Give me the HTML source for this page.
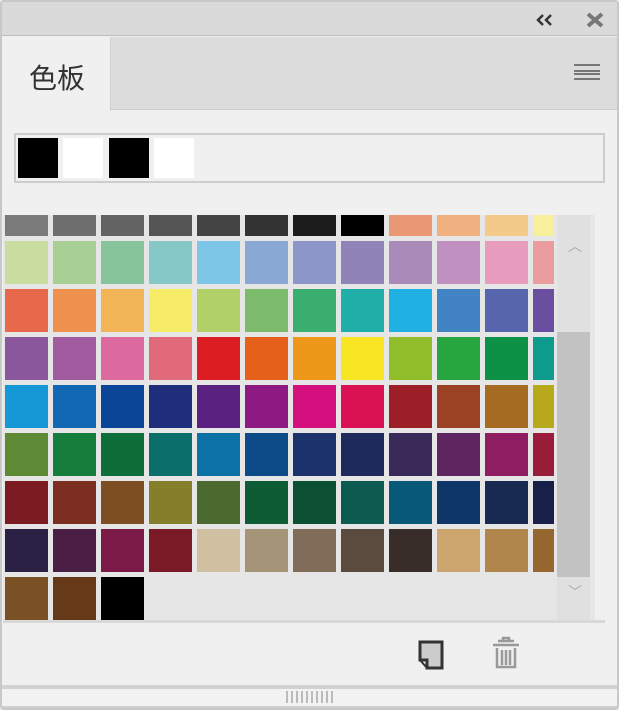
<!DOCTYPE html>
<html><head><meta charset="utf-8"><style>
*{margin:0;padding:0;box-sizing:border-box}
body{width:619px;height:710px;background:#f0f0f0;position:relative;overflow:hidden;font-family:"Liberation Sans","Noto Sans CJK SC",sans-serif}
.a{position:absolute}
.sw{position:absolute;width:43px;height:43px}
</style></head><body>
<div class="a" style="left:0;top:0;width:619px;height:710px;border:2px solid #c8c8c8;border-radius:4px"></div>
<div class="a" style="left:2px;top:2px;width:615px;height:34px;background:#dadada;border-bottom:1px solid #bdbdbd"></div>
<svg class="a" style="left:536px;top:13px" width="20" height="14"><path d="M7 2L2 7L7 12M15 2L10 7L15 12" stroke="#333" stroke-width="2.5" fill="none"/></svg>
<svg class="a" style="left:586px;top:12px" width="18" height="16"><path d="M2 2L16 14M16 2L2 14" stroke="#777" stroke-width="4"/></svg>
<div class="a" style="left:2px;top:37px;width:615px;height:73px;background:#dcdcdc;border-bottom:1px solid #cfcfcf"></div>
<div class="a" style="left:2px;top:37px;width:109px;height:74px;background:#f0f0f0;border-right:1px solid #cfcfcf"></div>
<div class="a" style="left:29px;top:57px;font-size:28px;color:#333">色板</div>
<div class="a" style="left:574px;top:64px;width:26px;height:16px;border-top:2px solid #777;border-bottom:2px solid #777"></div>
<div class="a" style="left:574px;top:70px;width:26px;height:5px;border-top:2px solid #777;border-bottom:2px solid #777"></div>
<div class="a" style="left:14px;top:133px;width:591px;height:50px;border:2px solid #cdcdcd"></div>
<div class="a" style="left:18px;top:138px;width:40px;height:40px;background:#000"></div>
<div class="a" style="left:63px;top:138px;width:40px;height:40px;background:#fff"></div>
<div class="a" style="left:109px;top:138px;width:40px;height:40px;background:#000"></div>
<div class="a" style="left:154px;top:138px;width:40px;height:40px;background:#fff"></div>
<div class="a" style="left:3px;top:215px;width:592px;height:406px;background:#e6e6e6;overflow:hidden" id="g"></div>
<div class="a" style="left:557px;top:215px;width:33px;height:405px;background:#e0e0e0"></div>
<div class="a" style="left:557px;top:332px;width:33px;height:245px;background:#c2c2c2"></div>
<div class="a" style="left:568px;top:236px;color:#aaa;font-size:14px">︿</div>
<div class="a" style="left:568px;top:582px;color:#aaa;font-size:14px">﹀</div>
<div class="a" style="left:3px;top:620px;width:602px;height:3px;background:#d8d8d8"></div>
<svg class="a" style="left:418px;top:640px" width="28" height="30"><path d="M2 2H24V28H9V20H2Z" fill="#ccc" stroke="#333" stroke-width="3"/><path d="M2 20L9 28" stroke="#333" stroke-width="2"/></svg>
<svg class="a" style="left:490px;top:636px" width="32" height="34"><path d="M8 5h16M3 9h26M13 4V2h6v2M7 12v19h18V12M12 14v15M16 14v15M20 14v15" stroke="#999" stroke-width="2.5" fill="none"/></svg>
<div class="a" style="left:2px;top:685px;width:615px;height:4px;background:#d2d2d2"></div>
<div class="a" style="left:2px;top:689px;width:615px;height:19px;background:#f2f2f2;border-bottom:2px solid #cfcfcf"></div>
<div class="a" style="left:286px;top:691px;width:48px;height:12px;background:repeating-linear-gradient(90deg,#bbb 0 2px,transparent 2px 5px)"></div>
<script>
var rows=[
["#7a7a7a","#6e6e6e","#636363","#555","#444","#333","#1c1c1c","#000","#ea9773","#f0b080","#f4ca8a","#f7ef9a"],
["#c8dd9f","#a8d095","#88c49b","#85c8c7","#7ec6e8","#8aa8d4","#8c96c8","#8f83b8","#a98ab9","#c090c0","#e89cbd","#eb9c9f"],
["#e7684a","#ee914f","#f1b558","#f7ec67","#b1d068","#7cbb6b","#3aae6e","#20aea8","#21b0e2","#4283c3","#5766ac","#6a4fa0"],
["#8a579c","#a35b9f","#dd6a9f","#e06a7a","#dc1e23","#e4601b","#ee9819","#f8e624","#8fbe2a","#27a53f","#0d9147","#0e9a8c"],
["#1698d6","#1268b2","#0b4597","#1e2d7c","#5a2181","#8c1a82","#d60f7f","#da1153","#9c1f27","#9b4224","#a56b22","#b8a81c"],
["#5f8a35","#177d3d","#0d6e3a","#0c6e6b","#0c71a5","#0d4a88","#1b326c","#1f2a5c","#3a2a5a","#5f2560","#8f1d62","#9a1c3b"],
["#7c1c22","#7c2e20","#7d4e22","#857f2c","#4a6a30","#0d5c36","#0b5032","#0c5a50","#08587a","#0e3668","#192a52","#18204a"],
["#2a2144","#4a1e45","#7b1a47","#7a1a26","#d0bfa0","#a69479","#806c58","#5b4a3e","#392d29","#cba46e","#b1864c","#956630"],
["#7a5125","#663918","#000"]];
var g=document.getElementById('g'),h='';
rows.forEach(function(r,i){r.forEach(function(c,j){
var t=i==0?0:26+(i-1)*48,hh=i==0?21:43,w=j==11?21:43;
h+='<div class="sw" style="left:'+(2+j*48)+'px;top:'+t+'px;height:'+hh+'px;width:'+w+'px;background:'+c+'"></div>';});});
g.innerHTML=h;
</script>
</body></html>
